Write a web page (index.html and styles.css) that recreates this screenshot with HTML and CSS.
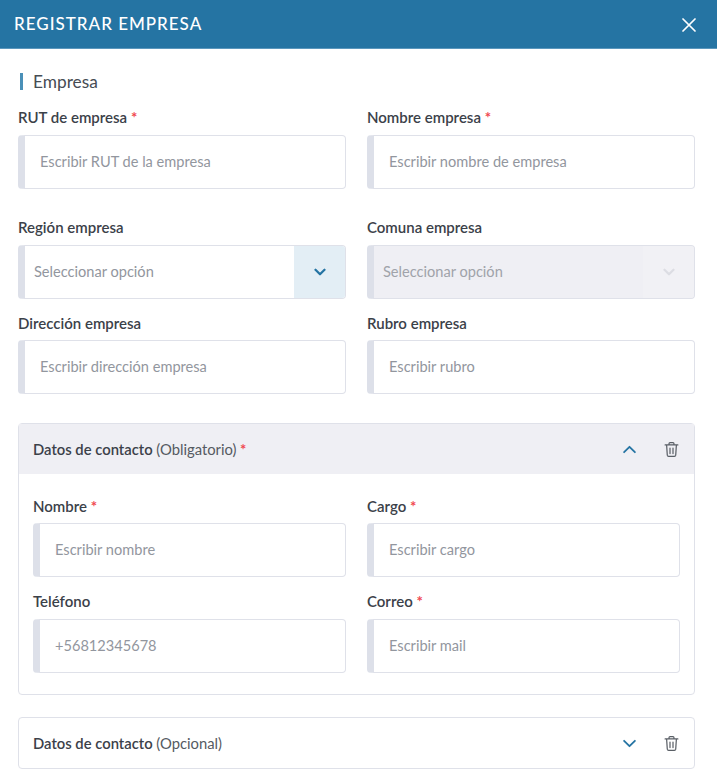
FILE: index.html
```html
<!DOCTYPE html>
<html lang="es">
<head>
<meta charset="utf-8">
<title>Registrar empresa</title>
<link rel="stylesheet" href="styles.css">
</head>
<body>
<svg class="defs" width="0" height="0" aria-hidden="true">
  <symbol id="trash" viewBox="0 0 16 17"><path d="M1.2 3.6h13.6M5.4 3.4V2.2c0-.6.4-1 1-1h3.2c.6 0 1 .4 1 1v1.2M2.8 3.8l.7 10.7c.1.8.6 1.3 1.4 1.3h6.2c.8 0 1.3-.5 1.4-1.3l.7-10.7M6.4 7v5.8M9.6 7v5.8" fill="none" stroke="currentColor" stroke-width="1.3" stroke-linecap="round" stroke-linejoin="round"/></symbol>
  <symbol id="chev" viewBox="0 0 16 10"><path d="M2 2l6 6 6-6" fill="none" stroke="currentColor" stroke-linecap="round" stroke-linejoin="round"/></symbol>
</svg>
<div class="modal">
  <header class="modal-head">
    <h1 class="modal-title">REGISTRAR EMPRESA</h1>
    <svg class="close" viewBox="0 0 14 14" aria-label="Cerrar"><path d="M1 1l12 12M13 1L1 13" fill="none" stroke="#fff" stroke-width="1.7" stroke-linecap="round"/></svg>
  </header>
  <main class="modal-body">
    <h2 class="section-title">Empresa</h2>
    <div class="grid grid-top">
      <div class="field">
        <label class="label">RUT de empresa <span class="req">*</span></label>
        <div class="input"><span class="ph">Escribir RUT de la empresa</span></div>
      </div>
      <div class="field">
        <label class="label">Nombre empresa <span class="req">*</span></label>
        <div class="input"><span class="ph">Escribir nombre de empresa</span></div>
      </div>
    </div>
    <div class="grid grid-select">
      <div class="field">
        <label class="label">Región empresa</label>
        <div class="input select"><span class="ph">Seleccionar opción</span><span class="caret"><svg class="chev-sm"><use href="#chev"/></svg></span></div>
      </div>
      <div class="field">
        <label class="label">Comuna empresa</label>
        <div class="input select disabled"><span class="ph">Seleccionar opción</span><span class="caret"><svg class="chev-sm"><use href="#chev"/></svg></span></div>
      </div>
    </div>
    <div class="grid grid-addr">
      <div class="field tight">
        <label class="label">Dirección empresa</label>
        <div class="input"><span class="ph">Escribir dirección empresa</span></div>
      </div>
      <div class="field tight">
        <label class="label">Rubro empresa</label>
        <div class="input"><span class="ph">Escribir rubro</span></div>
      </div>
    </div>
    <section class="card card-open">
      <div class="card-head shaded">
        <span class="card-title">Datos de contacto <span class="muted">(Obligatorio)</span> <span class="req">*</span></span>
        <svg class="chev-lg up"><use href="#chev"/></svg>
        <svg class="trash"><use href="#trash"/></svg>
      </div>
      <div class="card-body">
        <div class="grid">
          <div class="field tight">
            <label class="label">Nombre <span class="req">*</span></label>
            <div class="input"><span class="ph">Escribir nombre</span></div>
          </div>
          <div class="field tight">
            <label class="label">Cargo <span class="req">*</span></label>
            <div class="input"><span class="ph">Escribir cargo</span></div>
          </div>
        </div>
        <div class="grid grid-inner">
          <div class="field">
            <label class="label">Teléfono</label>
            <div class="input"><span class="ph">+56812345678</span></div>
          </div>
          <div class="field">
            <label class="label">Correo <span class="req">*</span></label>
            <div class="input"><span class="ph">Escribir mail</span></div>
          </div>
        </div>
      </div>
    </section>
    <section class="card card-closed">
      <div class="card-head">
        <span class="card-title">Datos de contacto <span class="muted">(Opcional)</span></span>
        <svg class="chev-lg"><use href="#chev"/></svg>
        <svg class="trash"><use href="#trash"/></svg>
      </div>
    </section>
  </main>
</div>
</body>
</html>
```
FILE: styles.css
```css
* { box-sizing: border-box; }
html, body { margin: 0; padding: 0; }
body {
  background: #fff;
  font-family: "Lato", "Noto Sans", sans-serif;
  color: #3b4149;
  height: 773px;
  overflow: hidden;
}
.defs { position: absolute; }
.modal-head {
  height: 49px;
  background: #2574a3;
  border-bottom: 1px solid #5b97bd;
  display: flex;
  align-items: center;
  justify-content: space-between;
  padding: 0 21px 1px 14px;
}
.modal-title {
  margin: 0;
  font-size: 17px;
  font-weight: 500;
  letter-spacing: 1px;
  color: #fff;
}
.close { width: 14px; height: 14px; margin-top: 2px; }
.modal-body { padding: 23px 22px 0 18px; }
.section-title {
  margin: 0 0 0 2px;
  padding-left: 13px;
  height: 18px;
  line-height: 20px;
  font-size: 17.3px;
  font-weight: 400;
  color: #464c54;
  position: relative;
}
.section-title::before {
  content: "";
  position: absolute;
  left: 0;
  top: 1px;
  width: 3px;
  height: 17px;
  background: #4a90b8;
}
.grid {
  display: grid;
  grid-template-columns: 328px 328px;
  column-gap: 21px;
}
.grid-top { margin-top: 18px; }
.grid-select { margin-top: 29px; }
.grid-addr { margin-top: 15px; }
.field { display: flex; flex-direction: column; gap: 9px; }
.field.tight { gap: 8px; }
.label {
  height: 18px;
  line-height: 18px;
  font-size: 15px;
  font-weight: 600;
  color: #3b4149;
}
.req { color: #f0474f; font-weight: 700; }
.input {
  height: 54px;
  border: 1px solid #dfe1e9;
  border-left: 7px solid #dde0e9;
  border-radius: 4px;
  display: flex;
  align-items: center;
  padding-left: 15px;
  background: #fff;
}
.ph { font-size: 14.6px; line-height: 18px; padding-bottom: 1px; color: #92969e; }
.select { padding-left: 9px; justify-content: space-between; overflow: hidden; }
.caret {
  width: 51px;
  height: 100%;
  background: #e3eef5;
  color: #2574a3;
  display: flex;
  align-items: center;
  justify-content: center;
}
.disabled { background: #efeff4; }
.disabled .ph { color: #a0a3aa; }
.disabled .caret { background: #f1f1f5; color: #dcdde3; }
.chev-sm { width: 12px; height: 8px; stroke-width: 3; }
.chev-lg { width: 15px; height: 9px; color: #2574a3; margin-left: auto; stroke-width: 2; }
.up { transform: rotate(180deg); }
.trash { width: 15px; height: 17px; margin-left: 27px; color: #5a5f66; }
.card { border: 1px solid #dfe1e9; border-radius: 4px; }
.card-open { margin-top: 29px; height: 272px; }
.card-closed { margin-top: 22px; height: 52px; }
.card-head {
  display: flex;
  align-items: center;
  height: 50px;
  padding: 0 15px 0 14px;
}
.shaded { background: #efeff4; }
.card-title { font-size: 14.8px; font-weight: 600; line-height: 18px; margin-top: -1px; color: #3b4149; }
.muted { font-weight: 400; color: #555a62; }
.card-body { padding: 23px 14px 0 14px; }
.card-body .grid { grid-template-columns: 313px 313px; column-gap: 21px; }
.grid-inner { margin-top: 15px; }
```
